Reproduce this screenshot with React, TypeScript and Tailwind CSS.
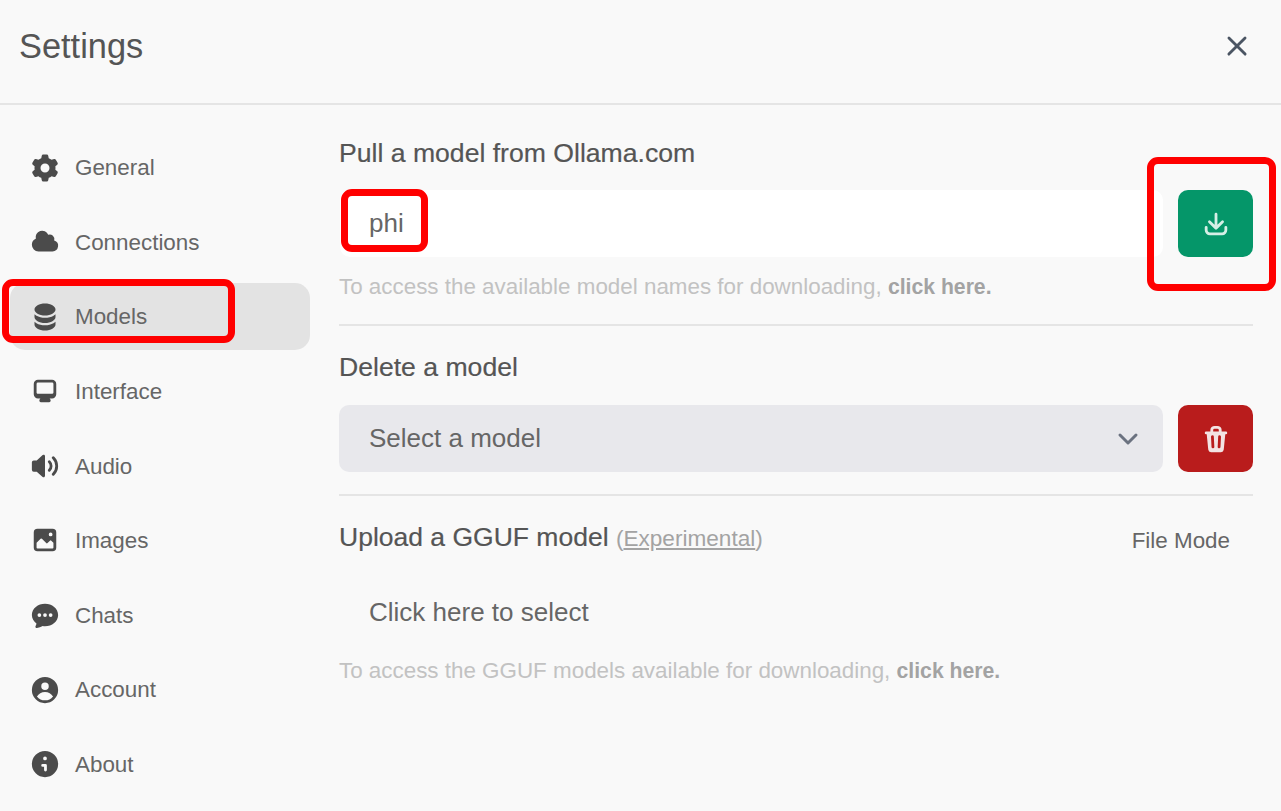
import React from "react";
import { HiMiniCog6Tooth, HiMiniCircleStack, HiMiniXMark } from "react-icons/hi2";

function Micro({ d, className }: { d: string | string[]; className?: string }) {
  const list = Array.isArray(d) ? d : [d];
  return (
    <svg viewBox="0 0 16 16" fill="currentColor" className={className}>
      {list.map((p, i) => (
        <path key={i} fillRule="evenodd" clipRule="evenodd" d={p} />
      ))}
    </svg>
  );
}

const cloud = "M1 9.5A3.5 3.5 0 0 0 4.5 13H12a3 3 0 0 0 .917-5.857 2.503 2.503 0 0 0-3.198-3.019 3.5 3.5 0 0 0-6.628 2.171A3.5 3.5 0 0 0 1 9.5Z";
const desktop = "M2 4.25A2.25 2.25 0 0 1 4.25 2h7.5A2.25 2.25 0 0 1 14 4.25v5.5A2.25 2.25 0 0 1 11.75 12h-1.312c.1.128.21.248.328.36a.75.75 0 0 1 .234.545v.345a.75.75 0 0 1-.75.75h-4.5a.75.75 0 0 1-.75-.75v-.345a.75.75 0 0 1 .234-.545c.118-.111.228-.232.328-.36H4.25A2.25 2.25 0 0 1 2 9.75v-5.5Zm2.25-.75a.75.75 0 0 0-.75.75v4.5c0 .414.336.75.75.75h7.5a.75.75 0 0 0 .75-.75v-4.5a.75.75 0 0 0-.75-.75h-7.5Z";
const speaker = [
  "M7.557 2.066A.75.75 0 0 1 8 2.75v10.5a.75.75 0 0 1-1.248.56L3.59 11H2a1 1 0 0 1-1-1V6a1 1 0 0 1 1-1h1.59l3.162-2.81a.75.75 0 0 1 .805-.124ZM12.95 3.05a.75.75 0 1 0-1.06 1.06 5.5 5.5 0 0 1 0 7.78.75.75 0 1 0 1.06 1.06 7 7 0 0 0 0-9.9Z",
  "M10.828 5.172a.75.75 0 1 0-1.06 1.06 2.5 2.5 0 0 1 0 3.536.75.75 0 1 0 1.06 1.06 4 4 0 0 0 0-5.656Z",
];
const photo = "M2 4a2 2 0 0 1 2-2h8a2 2 0 0 1 2 2v8a2 2 0 0 1-2 2H4a2 2 0 0 1-2-2V4Zm10.5 5.707a.5.5 0 0 0-.146-.353l-1-1a.5.5 0 0 0-.708 0L9.354 9.646a.5.5 0 0 1-.708 0L6.354 7.354a.5.5 0 0 0-.708 0l-2 2a.5.5 0 0 0-.146.353V12a.5.5 0 0 0 .5.5h8a.5.5 0 0 0 .5-.5V9.707ZM12 5a1 1 0 1 1-2 0 1 1 0 0 1 2 0Z";
const chat = "M8 2C4.262 2 1 4.57 1 8c0 1.86.98 3.486 2.455 4.566a3.472 3.472 0 0 1-.469 1.26.75.75 0 0 0 .713 1.14 6.961 6.961 0 0 0 3.06-1.06c.403.062.818.094 1.241.094 3.738 0 7-2.57 7-6s-3.262-6-7-6ZM5 9a1 1 0 1 0 0-2 1 1 0 0 0 0 2Zm7-1a1 1 0 1 1-2 0 1 1 0 0 1 2 0ZM8 9a1 1 0 1 0 0-2 1 1 0 0 0 0 2Z";
const user = "M15 8A7 7 0 1 1 1 8a7 7 0 0 1 14 0Zm-5-2a2 2 0 1 1-4 0 2 2 0 0 1 4 0ZM8 9c-1.825 0-3.422.977-4.295 2.437A5.49 5.49 0 0 0 8 13.5a5.49 5.49 0 0 0 4.294-2.063C11.422 9.977 9.825 9 8 9Z";
const info = "M15 8A7 7 0 1 1 1 8a7 7 0 0 1 14 0ZM9 5a1 1 0 1 1-2 0 1 1 0 0 1 2 0ZM6.75 8a.75.75 0 0 0 0 1.5h.75v1.75a.75.75 0 0 0 1.5 0v-2.5A.75.75 0 0 0 8.25 8h-1.5Z";
const trash = "M5 3.25V4H2.75a.75.75 0 0 0 0 1.5h.3l.815 8.15A1.5 1.5 0 0 0 5.357 15h5.285a1.5 1.5 0 0 0 1.493-1.35l.815-8.15h.3a.75.75 0 0 0 0-1.5H11v-.75A2.25 2.25 0 0 0 8.75 1h-1.5A2.25 2.25 0 0 0 5 3.25Zm2.25-.75a.75.75 0 0 0-.75.75V4h3v-.75a.75.75 0 0 0-.75-.75h-1.5ZM6.05 6a.75.75 0 0 1 .787.713l.275 5.5a.75.75 0 0 1-1.498.075l-.275-5.5A.75.75 0 0 1 6.05 6Zm3.9 0a.75.75 0 0 1 .712.787l-.275 5.5a.75.75 0 0 1-1.498-.075l.275-5.5a.75.75 0 0 1 .786-.711Z";

const iconClass = "w-[30px] h-[30px] text-[#4b4b4b]";
const items: [string, React.ReactNode][] = [
  ["General", <HiMiniCog6Tooth className={iconClass} />],
  ["Connections", <Micro d={cloud} className={iconClass} />],
  ["Models", <HiMiniCircleStack className={iconClass} />],
  ["Interface", <Micro d={desktop} className={iconClass} />],
  ["Audio", <Micro d={speaker} className={iconClass} />],
  ["Images", <Micro d={photo} className={iconClass} />],
  ["Chats", <Micro d={chat} className={iconClass} />],
  ["Account", <Micro d={user} className={iconClass} />],
  ["About", <Micro d={info} className={iconClass} />],
];

const heading = "text-[26.6px] leading-[36px] font-normal text-[#555] [-webkit-text-stroke:0.2px_#555]";

function Mark({ className }: { className: string }) {
  return <div className={`absolute border-[7px] border-[#ff0000] rounded-[11px] pointer-events-none ${className}`} />;
}

export default function App() {
  return (
    <div className="relative w-[1281px] h-[811px] overflow-hidden bg-[#f9f9f9] text-[#4b5563] font-['Liberation_Sans',Arial,sans-serif]">
      <header className="h-[105px] border-b-2 border-[#e5e5e5] pl-[19px] pr-[30px] flex items-center justify-between pb-[10px]">
        <h1 className="text-[34.4px] font-normal text-[#555]">Settings</h1>
        <HiMiniXMark className="w-[38px] h-[38px] text-[#4b5563] relative -top-[1px] left-[5px]" />
      </header>
      <div className="flex">
        <nav className="w-[300px] ml-[10px] pt-[29px] flex flex-col gap-[7.6px] shrink-0">
          {items.map(([label, icon]) => (
            <div
              key={label}
              className={`h-[67px] flex items-center rounded-[15px] pl-[20px] gap-[15px] text-[22.4px] text-[#666] ${label === "Models" ? "bg-[#e3e3e3]" : ""}`}
            >
              {icon}
              <span className="relative top-[0.5px]">{label}</span>
            </div>
          ))}
        </nav>
        <main className="ml-[29px] w-[914px] pt-[30px]">
          <h2 className={heading}>Pull a model from Ollama.com</h2>
          <div className="mt-[19px] flex gap-[15px]">
            <div className="h-[67px] w-[824px] ml-px bg-white rounded-[10px] pl-[29px] flex items-center text-[26px] text-[#666]">phi</div>
            <button className="h-[67px] w-[75px] rounded-[10px] bg-[#059669] flex items-center justify-center">
              <Micro
                d={[
                  "M8.75 2.75a.75.75 0 0 0-1.5 0v5.69L5.03 6.22a.75.75 0 0 0-1.06 1.06l3.5 3.5a.75.75 0 0 0 1.06 0l3.5-3.5a.75.75 0 0 0-1.06-1.06L8.75 8.44V2.75Z",
                  "M3.5 9.75a.75.75 0 0 0-1.5 0v1.5A2.75 2.75 0 0 0 4.75 14h6.5A2.75 2.75 0 0 0 14 11.25v-1.5a.75.75 0 0 0-1.5 0v1.5c0 .69-.56 1.25-1.25 1.25h-6.5c-.69 0-1.25-.56-1.25-1.25v-1.5Z",
                ]}
                className="w-[30px] h-[30px] text-[#d6efe6]"
              />
            </button>
          </div>
          <p className="mt-[16px] text-[22.4px] leading-[28px] text-[#c2c2c2]">
            To access the available model names for downloading, <span className="font-bold text-[21.2px] text-[#a3a3a3]">click here.</span>
          </p>
          <hr className="mt-[23px] border-0 border-t-2 border-[#e5e5e5]" />
          <h2 className={`mt-[23px] ${heading}`}>Delete a model</h2>
          <div className="mt-[20px] flex gap-[15px]">
            <div className="h-[67px] w-[825px] bg-[#e8e8ec] rounded-[10px] pl-[30px] pr-[15px] flex items-center justify-between text-[26px] text-[#666]">
              <span>Select a model</span>
              <svg viewBox="0 0 20 20" fill="none" className="w-[40px] h-[40px] text-[#6b7280]">
                <path d="m6 8 4 4 4-4" stroke="currentColor" strokeWidth="1.5" strokeLinecap="round" strokeLinejoin="round" />
              </svg>
            </div>
            <button className="h-[67px] w-[75px] rounded-[10px] bg-[#b91c1c] flex items-center justify-center">
              <Micro d={trash} className="w-[30px] h-[30px] text-[#f3e3e3]" />
            </button>
          </div>
          <hr className="mt-[22px] border-0 border-t-2 border-[#e5e5e5]" />
          <div className="mt-[23px] flex items-center justify-between pr-[23px]">
            <div className="text-[26.5px] leading-[36px] text-[#555] [-webkit-text-stroke:0.2px_#555]">
              Upload a GGUF model{" "}
              <span className="text-[22.6px] font-normal text-[#a3a3a3] [-webkit-text-stroke:0px]">
                (<span className="underline">Experimental</span>)
              </span>
            </div>
            <span className="relative top-[3px] text-[22.4px] text-[#666]">File Mode</span>
          </div>
          <div className="mt-[37px] pl-[30px] text-[26px] leading-[36px] text-[#666]">Click here to select</div>
          <p className="mt-[27px] text-[22.4px] leading-[28px] text-[#c2c2c2]">
            To access the GGUF models available for downloading, <span className="font-bold text-[21.2px] text-[#a3a3a3]">click here.</span>
          </p>
        </main>
      </div>
      <Mark className="left-[2px] top-[279px] w-[233px] h-[64px]" />
      <Mark className="left-[341px] top-[189px] w-[87px] h-[63px]" />
      <Mark className="left-[1147px] top-[157px] w-[129px] h-[134px]" />
    </div>
  );
}
